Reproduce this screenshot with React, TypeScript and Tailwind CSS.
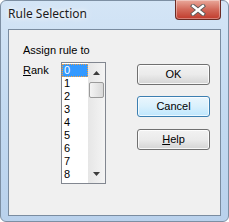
const items = ["0", "1", "2", "3", "4", "5", "6", "7", "8"];

function CloseButton() {
  return (
    <div className="-mt-px w-[46px] h-[20px] rounded-b-[4px] border border-t-0 border-[#6b2b24] bg-gradient-to-b from-[#e9a99c] via-[#d2695a] to-[#c0392b] flex items-center justify-center shadow-[inset_0_0_0_1px_rgba(255,255,255,0.35)]">
      <svg width="16" height="12" viewBox="0 0 16 12">
        <path d="M3 2 L13 10 M13 2 L3 10" stroke="#5a5a5a" strokeWidth="4.2" strokeLinecap="square" />
        <path d="M3 2 L13 10 M13 2 L3 10" stroke="#ffffff" strokeWidth="2.4" strokeLinecap="square" />
      </svg>
    </div>
  );
}

function Arrow({ up }: { up?: boolean }) {
  return (
    <svg width="7" height="4" viewBox="0 0 7 4">
      <polygon points={up ? "3.5,0 7,4 0,4" : "0,0 7,0 3.5,4"} fill="#3d3d3d" />
    </svg>
  );
}

function ListBox() {
  return (
    <div className="w-[45px] h-[122px] border border-[#828790] bg-white flex">
      <div className="flex-1 flex flex-col pt-px">
        {items.map((n, i) => (
          <div
            key={n}
            className={
              i === 0
                ? "h-[13px] leading-[11px] pl-px bg-[#3399ff] text-white border border-dotted border-[#f5a040]"
                : "h-[13px] leading-[13px] pl-[2px] text-black"
            }
          >
            {n}
          </div>
        ))}
      </div>
      <div className="w-[17px] flex flex-col bg-gradient-to-r from-[#e6e6e6] to-[#f4f4f4]">
        <div className="h-[19px] flex items-center justify-center">
          <Arrow up />
        </div>
        <div className="mx-px h-[16px] rounded-[2px] border border-[#9a9a9a] bg-gradient-to-r from-[#f4f4f4] to-[#d9d9d9]" />
        <div className="flex-1" />
        <div className="h-[18px] flex items-center justify-center">
          <Arrow />
        </div>
      </div>
    </div>
  );
}

function Button({ children, active }: { children: React.ReactNode; active?: boolean }) {
  return (
    <div
      className={
        active
          ? "w-[73px] h-[21px] rounded-[3px] border border-[#3c7fb1] bg-gradient-to-b from-[#eaf6fd] via-[#d9f0fc] to-[#bee6fd] flex items-center justify-center text-black shadow-[inset_0_0_0_1px_rgba(255,255,255,0.7)]"
          : "w-[73px] h-[21px] rounded-[3px] border border-[#707070] bg-gradient-to-b from-[#f2f2f2] via-[#ebebeb] to-[#d4d4d4] flex items-center justify-center text-black shadow-[inset_0_0_0_1px_rgba(255,255,255,0.8)]"
      }
    >
      {children}
    </div>
  );
}

export default function App() {
  return (
    <div className="w-[229px] h-[222px] bg-white font-['Liberation_Sans',Arial,sans-serif] text-[11px] leading-[13px]">
      <div className="w-full h-full flex flex-col rounded-[6px] border border-[#7d8fa3] bg-gradient-to-b from-[#d4e5f6] via-[#c3daf1] to-[#b9d1ec] px-[7px] pb-[5px]">
        <div className="h-[28px] flex items-start justify-between">
          <span className="pt-[5px] text-[12px] leading-[16px] text-[#1b1b1b] font-['Noto_Sans',sans-serif] [text-shadow:0_0_8px_#ffffff,0_0_4px_#ffffff]">
            Rule Selection
          </span>
          <CloseButton />
        </div>
        <div className="flex-1 border border-[#7a8ca0] bg-[#f0f0f0] flex pl-[14px] pt-[14px]">
          <div className="flex flex-col">
            <div className="text-black">Assign rule to</div>
            <div className="mt-[5px] flex">
              <div className="w-[38px] mt-[2px] text-black">
                <span className="underline underline-offset-1">R</span>ank
              </div>
              <ListBox />
            </div>
          </div>
          <div className="ml-[31px] mt-[20px] flex flex-col gap-[11px]">
            <Button>OK</Button>
            <Button active>Cancel</Button>
            <div className="mt-px">
              <Button>
                <span className="underline underline-offset-1">H</span>elp
              </Button>
            </div>
          </div>
        </div>
      </div>
    </div>
  );
}
